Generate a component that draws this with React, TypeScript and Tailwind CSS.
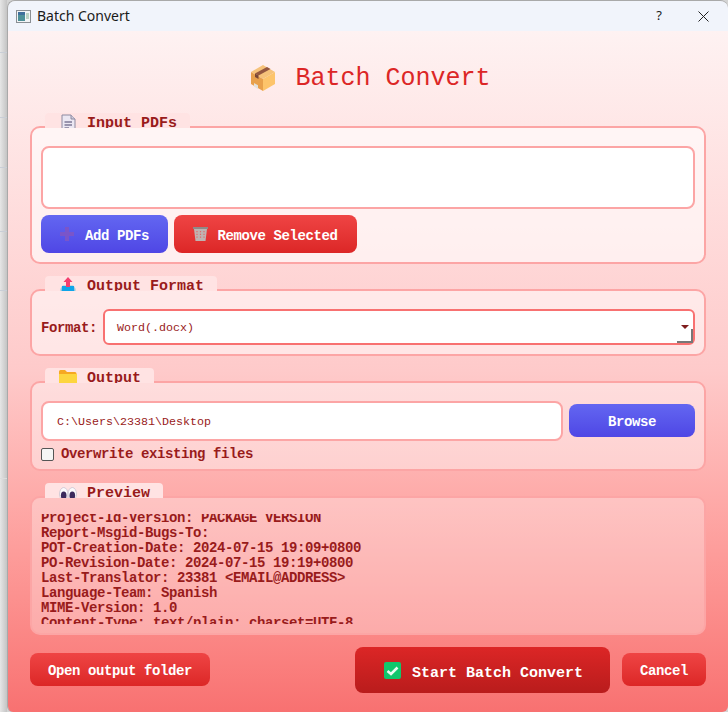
import React from "react";

const mono = "font-['Liberation_Mono',monospace]";
const bold8 = "text-[14px] tracking-[-0.4px] font-bold";

function BoxIcon() {
  return (
    <svg width="28" height="28" viewBox="0 0 28 28">
      <path d="M14 1 L26 8 L14 15 L2 8 Z" fill="#f6c27a" />
      <path d="M2 8 L14 15 V27 L2 20 Z" fill="#e8a04c" />
      <path d="M26 8 L14 15 V27 L26 20 Z" fill="#fdc46b" />
      <path d="M6 9.5 L18 3 L21.5 5 L9.5 11.6 Z" fill="#95573f" />
      <path d="M6 9.5 L9.5 11.6 V15 L6 13 Z" fill="#7a4636" />
      <path d="M5 19 L9 21.3 V25 L5 22.6 Z" fill="#e3e1dc" />
    </svg>
  );
}
function DocIcon() {
  return (
    <svg width="15" height="18" viewBox="0 0 15 18">
      <path d="M1 1 H10 L14 5 V18 H1 Z" fill="#ebe7f2" stroke="#8d8aa0" strokeWidth="1" />
      <path d="M10 1 V5 H14" fill="#cfcbdc" stroke="#8d8aa0" strokeWidth="1" />
      <path d="M3.5 8 H11 M3.5 11 H11 M3.5 14 H8" stroke="#7f7a96" strokeWidth="1.4" />
    </svg>
  );
}
function OutboxIcon() {
  return (
    <svg width="16" height="18" viewBox="0 0 16 18">
      <path d="M0 12 L3 8 H13 L16 12 V18 H0 Z" fill="#c9d6dc" />
      <path d="M2 9 H14 L14.5 15 H1.5 Z" fill="#0ea5e9" />
      <path d="M8 0 L12.5 5 H10 V10 H6 V5 H3.5 Z" fill="#f43f6e" />
    </svg>
  );
}
function FolderIcon() {
  return (
    <svg width="18" height="14" viewBox="0 0 18 14">
      <path d="M0 1.5 Q0 0 1.5 0 H6 L8 2 H16 Q17.5 2 17.5 3.5 V5 H0 Z" fill="#f6a821" />
      <path d="M0 4 H18 V12.5 Q18 14 16.5 14 H1.5 Q0 14 0 12.5 Z" fill="#fdd53f" />
    </svg>
  );
}
function EyesIcon() {
  return (
    <svg width="18" height="14" viewBox="0 0 18 14">
      <ellipse cx="4.7" cy="7" rx="4.2" ry="6.5" fill="#fbfafc" stroke="#c9c4d0" strokeWidth="0.8" />
      <ellipse cx="13.3" cy="7" rx="4.2" ry="6.5" fill="#fbfafc" stroke="#c9c4d0" strokeWidth="0.8" />
      <ellipse cx="4.7" cy="8.5" rx="2.8" ry="4" fill="#3b2a5c" />
      <ellipse cx="13.3" cy="8.5" rx="2.8" ry="4" fill="#3b2a5c" />
    </svg>
  );
}
function PlusIcon() {
  return (
    <svg width="14" height="14" viewBox="0 0 14 14">
      <path d="M5 0 H9 V5 H14 V9 H9 V14 H5 V9 H0 V5 H5 Z" fill="#7a55c9" />
    </svg>
  );
}
function TrashIcon() {
  return (
    <svg width="15" height="14" viewBox="0 0 15 14">
      <path d="M0 0 H15 V2 H0 Z" fill="#8f8a88" />
      <path d="M1 2 H14 L12.5 14 H2.5 Z" fill="#bfb3b1" />
      <path d="M4 4 V12 M7.5 4 V12 M11 4 V12" stroke="#e26a6a" strokeWidth="1.2" strokeDasharray="1.2 1.6" />
    </svg>
  );
}
function CheckIcon() {
  return (
    <svg width="17" height="17" viewBox="0 0 17 17">
      <rect width="17" height="17" rx="2" fill="#10c76c" />
      <path d="M3.5 9 L7 12 L13.5 5.5" fill="none" stroke="#e9fbf1" strokeWidth="2.6" />
    </svg>
  );
}
function AppIcon() {
  return (
    <svg width="15" height="13" viewBox="0 0 15 13">
      <rect x="0.5" y="0.5" width="14" height="12" fill="#f2f4f6" stroke="#8a8f94" />
      <rect x="2" y="2" width="7" height="9" fill="#4d9098" />
      <rect x="2" y="2" width="7" height="3" fill="#3f6f9c" />
      <rect x="10" y="3" width="3" height="6" fill="#bcd2c4" />
    </svg>
  );
}

function Legend({ icon, text, w, iconTop }: { icon: React.ReactNode; text: string; w: string; iconTop: string }) {
  return (
    <div className={`relative z-10 ml-[15px] -mb-[2px] flex h-[15px] items-start overflow-hidden rounded-t-[4px] bg-[#ffe3e3] ${w}`}>
      <div className={`ml-[14px] flex h-[20px] w-[18px] shrink-0 items-start justify-center ${iconTop}`}>{icon}</div>
      <span className={`${mono} ml-[10px] text-[15px] leading-[22px] font-bold text-[#991b1b]`}>{text}</span>
    </div>
  );
}

function Btn({ className, children }: { className: string; children: React.ReactNode }) {
  return (
    <div className={`${mono} flex items-center justify-center rounded-[8px] font-bold text-white ${className}`}>
      {children}
    </div>
  );
}

const preview = [
  "Project-Id-Version: PACKAGE VERSION",
  "Report-Msgid-Bugs-To:",
  "POT-Creation-Date: 2024-07-15 19:09+0800",
  "PO-Revision-Date: 2024-07-15 19:19+0800",
  "Last-Translator: 23381 <EMAIL@ADDRESS>",
  "Language-Team: Spanish",
  "MIME-Version: 1.0",
  "Content-Type: text/plain; charset=UTF-8",
];

export default function App() {
  return (
    <div className="flex h-[712px] w-[728px] overflow-hidden bg-[#d4d4d4]">
      <div className="flex w-[7px] shrink-0 flex-col bg-gradient-to-r from-[#e6e6e6] to-[#c4c4c4]">
        <div className="h-[53px] border-b border-[#c9ced6]" />
        <div className="h-[65px] border-b border-[#c9ced6]" />
        <div className="h-[50px] border-b border-[#c9ced6]" />
        <div className="h-[64px] border-b border-[#c9ced6]" />
        <div className="h-[59px] border-b border-[#c9ced6]" />
        <div className="h-[188px] border-b border-[#dcdcdc]" />
      </div>
      <div className="flex min-w-0 flex-1 flex-col overflow-hidden rounded-t-[8px] rounded-b-[6px] border-t border-l border-[#a9a9a9]">
        <div className="flex h-[30px] shrink-0 items-center bg-[#f1f4fb] pl-[8px] font-['Noto_Sans',sans-serif] text-[14px] text-[#1a1a1a]">
          <AppIcon />
          <span className="ml-[6px] leading-[30px]">Batch Convert</span>
          <span className="ml-auto text-[13px]">?</span>
          <svg className="mr-[19px] ml-[36px]" width="11" height="11" viewBox="0 0 11 11">
            <path d="M0.5 0.5 L10.5 10.5 M10.5 0.5 L0.5 10.5" stroke="#222" strokeWidth="1" />
          </svg>
        </div>
        <div className="flex flex-1 flex-col bg-gradient-to-b from-[#fef2f2] via-[#fecaca] to-[#f87171] px-[22px]">
          <div className="mt-[27px] flex h-[40px] items-center justify-center pl-[4px]">
            <BoxIcon />
            <span className={`${mono} ml-[18px] pt-[2px] text-[25px] leading-[40px] text-[#dc2626]`}>Batch Convert</span>
          </div>

          <div className="mt-[15px]">
            <Legend icon={<DocIcon />} text="Input PDFs" w="w-[145px]" iconTop="mt-[1px]" />
            <div className="flex h-[138px] flex-col rounded-[10px] border-2 border-[#fca5a5] bg-[#ffffff99] px-[9px] pt-[18px]">
              <div className="h-[63px] rounded-[8px] border-2 border-[#fca5a5] bg-white" />
              <div className="mt-[6px] flex gap-[6px]">
                <Btn className={`h-[38px] w-[127px] bg-gradient-to-b from-[#6366f1] to-[#4f46e5] ${bold8}`}>
                  <PlusIcon />
                  <span className="ml-[11px] pt-[4px]">Add PDFs</span>
                </Btn>
                <Btn className={`h-[38px] w-[183px] bg-gradient-to-b from-[#ef4444] to-[#dc2626] ${bold8}`}>
                  <TrashIcon />
                  <span className="ml-[9px] pt-[4px]">Remove Selected</span>
                </Btn>
              </div>
            </div>
          </div>

          <div className="mt-[12px]">
            <Legend icon={<OutboxIcon />} text="Output Format" w="w-[172px]" iconTop="mt-[1px]" />
            <div className="flex h-[67px] items-start rounded-[10px] border-2 border-[#fca5a5] bg-[#ffffff80] px-[9px] pt-[18px]">
              <span className={`${mono} w-[62px] pt-[11px] ${bold8} leading-[16px] text-[#991b1b]`}>Format:</span>
              <div className="relative flex h-[36px] flex-1 items-center rounded-[6px] border-2 border-[#f87171] bg-white pl-[12px]">
                <span className={`${mono} pt-[3px] text-[11.67px] text-[#991b1b]`}>Word(.docx)</span>
                <span className="absolute top-[14px] right-[4px] h-0 w-0 border-x-[4px] border-t-[4px] border-x-transparent border-t-[#7f1d1d]" />
                <span className="absolute right-0 bottom-0 h-[14px] w-[16px] border-r-2 border-b-2 border-[#777]" />
              </div>
            </div>
          </div>

          <div className="mt-[12px]">
            <Legend icon={<FolderIcon />} text="Output" w="w-[109px]" iconTop="mt-[2px]" />
            <div className="flex h-[90px] flex-col rounded-[10px] border-2 border-[#fca5a5] bg-[#ffffff66] px-[9px] pt-[18px]">
              <div className="flex items-start gap-[6px]">
                <div className="flex h-[40px] w-[522px] items-center rounded-[8px] border-2 border-[#fca5a5] bg-white pl-[14px]">
                  <span className={`${mono} pt-[3px] text-[11.67px] text-[#991b1b]`}>C:\Users\23381\Desktop</span>
                </div>
                <Btn className={`mt-[3px] h-[33px] w-[126px] bg-gradient-to-b from-[#6366f1] to-[#4f46e5] ${bold8}`}>
                  <span className="pt-[3px]">Browse</span>
                </Btn>
              </div>
              <div className="mt-[6px] flex items-center">
                <span className="h-[13px] w-[13px] rounded-[2px] border border-[#555] bg-[#f5f5f5]" />
                <span className={`${mono} ml-[7px] pt-[1px] ${bold8} leading-[13px] text-[#991b1b]`}>Overwrite existing files</span>
              </div>
            </div>
          </div>

          <div className="mt-[12px]">
            <Legend icon={<EyesIcon />} text="Preview" w="w-[118px]" iconTop="mt-[4px]" />
            <div className="h-[139px] rounded-[10px] border-2 border-[#fca5a5] bg-[#ffffff4d] px-[9px] pt-[16px]">
              <div className={`${mono} h-[110px] overflow-hidden ${bold8} leading-[15px] whitespace-pre text-[#991b1b]`}>
                <div className="-mt-[3px]">
                  {preview.map((l) => (
                    <div key={l}>{l}</div>
                  ))}
                </div>
              </div>
            </div>
          </div>

          <div className="mt-[12px] flex items-start">
            <Btn className={`mt-[6px] h-[33px] w-[180px] bg-gradient-to-b from-[#ef4444] to-[#dc2626] ${bold8}`}>
              <span className="pt-[3px]">Open output folder</span>
            </Btn>
            <Btn className="ml-[145px] h-[46px] w-[255px] bg-gradient-to-b from-[#dc2626] to-[#b91c1c] pl-[2px] text-[15px]">
              <CheckIcon />
              <span className="ml-[11px] pt-[8px]">Start Batch Convert</span>
            </Btn>
            <Btn className={`mt-[6px] ml-[12px] h-[33px] w-[84px] bg-gradient-to-b from-[#ef4444] to-[#dc2626] ${bold8}`}>
              <span className="pt-[3px]">Cancel</span>
            </Btn>
          </div>
        </div>
      </div>
    </div>
  );
}
